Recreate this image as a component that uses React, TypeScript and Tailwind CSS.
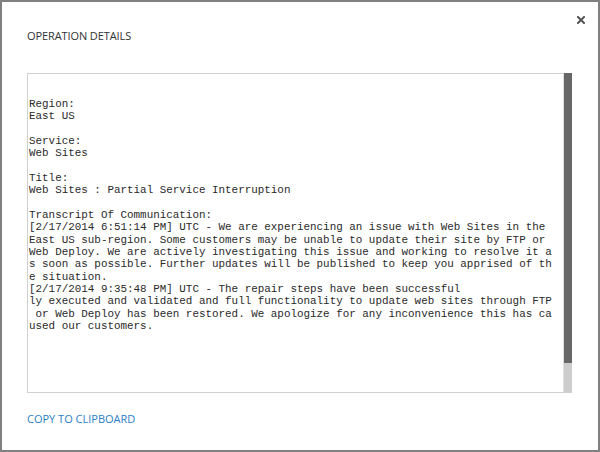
import React from "react";

const lines = [
  "Region:",
  "East US",
  "",
  "Service:",
  "Web Sites",
  "",
  "Title:",
  "Web Sites : Partial Service Interruption",
  "",
  "Transcript Of Communication:",
  "[2/17/2014 6:51:14 PM] UTC - We are experiencing an issue with Web Sites in the",
  "East US sub-region. Some customers may be unable to update their site by FTP or",
  "Web Deploy. We are actively investigating this issue and working to resolve it a",
  "s soon as possible. Further updates will be published to keep you apprised of th",
  "e situation.",
  "[2/17/2014 9:35:48 PM] UTC - The repair steps have been successful",
  "ly executed and validated and full functionality to update web sites through FTP",
  " or Web Deploy has been restored. We apologize for any inconvenience this has ca",
  "used our customers.",
];

export default function App() {
  return (
    <div className="w-[600px] h-[452px] border-2 border-[#808080] bg-white flex flex-col pl-[25px] pr-[26px] font-['Open_Sans',sans-serif]">
      <div className="flex justify-end pt-[14px] -mr-[13px]">
        <button aria-label="close" className="w-[8px] h-[8px] flex">
          <svg width="8" height="8" viewBox="0 0 8 8">
            <path d="M1 1 L7 7 M7 1 L1 7" stroke="#555" strokeWidth="2" strokeLinecap="square" />
          </svg>
        </button>
      </div>
      <div className="mt-[4px] text-[11px] leading-[15px] text-[#333] tracking-[-0.1px]">OPERATION DETAILS</div>
      <div className="mt-[30px] h-[320px] border border-[#d0d0d0] flex">
        <div className="flex-1 pt-[24px] pl-px whitespace-pre font-['Liberation_Mono',monospace] text-[10.9px] leading-[12.33px] text-[#2a2a2a] overflow-hidden">
          {lines.map((l, i) => (
            <div key={i} className="h-[12.33px]">{l}</div>
          ))}
        </div>
        <div className="w-[9px] -mt-px -mr-px flex flex-col bg-[#cdcdcd] border-l border-[#e0e0e0]">
          <div className="h-[290px] bg-[#676767]" />
        </div>
      </div>
      <div className="mt-[18px] text-[11px] leading-[15px] text-[#2b7fc6]">COPY TO CLIPBOARD</div>
    </div>
  );
}
